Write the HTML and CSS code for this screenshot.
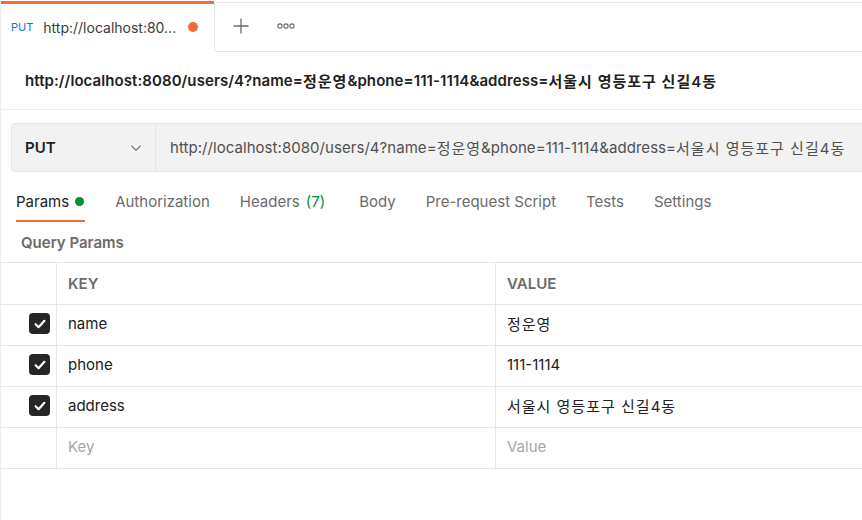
FILE: index.html
```html
<!DOCTYPE html>
<html>
<head>
<meta charset="utf-8">
<link rel="stylesheet" href="styles.css">
</head>
<body>
<div class="page">
  <div class="tabbar">
    <div class="tab-active">
      <span class="tab-method">PUT</span>
      <span class="tab-name">http://localhost:80...</span>
      <span class="tab-dot"></span>
    </div>
    <div class="tab-rest">
      <svg class="icon-plus" width="18" height="18" viewBox="0 0 18 18"><path d="M9 1.5v15M1.5 9h15" stroke="#6b6b6b" stroke-width="1.3" fill="none"/></svg>
      <svg class="icon-more" width="18" height="8" viewBox="0 0 18 8"><circle cx="3" cy="4" r="2.1" stroke="#6b6b6b" stroke-width="1.1" fill="none"/><circle cx="9" cy="4" r="2.1" stroke="#6b6b6b" stroke-width="1.1" fill="none"/><circle cx="15" cy="4" r="2.1" stroke="#6b6b6b" stroke-width="1.1" fill="none"/></svg>
    </div>
  </div>

  <div class="urltitle">http://localhost:8080/users/4?name=<span class="ko">정운영</span>&amp;phone=111-1114&amp;address=<span class="ko">서울시 영등포구 신길4동</span></div>

  <div class="urlbar">
    <div class="method">
      <span class="method-name">PUT</span>
      <svg class="chev" width="12" height="8" viewBox="0 0 12 8"><path d="M1.5 1.8l4.5 4.4 4.5-4.4" stroke="#6b6b6b" stroke-width="1.1" fill="none"/></svg>
    </div>
    <div class="url-input">http://localhost:8080/users/4?name=<span class="ko">정운영</span>&amp;phone=111-1114&amp;address=<span class="ko">서울시 영등포구 신길4동</span></div>
  </div>

  <div class="reqtabs">
    <div class="reqtab active">Params <span class="gdot"></span></div>
    <div class="reqtab">Authorization</div>
    <div class="reqtab headers">Headers <span class="count">(7)</span></div>
    <div class="reqtab">Body</div>
    <div class="reqtab">Pre-request Script</div>
    <div class="reqtab">Tests</div>
    <div class="reqtab">Settings</div>
  </div>

  <div class="qp-title">Query Params</div>

  <div class="table">
    <div class="row head">
      <div class="c-chk"></div>
      <div class="c-key">KEY</div>
      <div class="c-val">VALUE</div>
    </div>
    <div class="row">
      <div class="c-chk"><span class="cb"><svg width="12" height="10" viewBox="0 0 12 10"><path d="M1.6 5.2l3 3 5.8-6.4" stroke="#fff" stroke-width="2.2" fill="none" stroke-linecap="round" stroke-linejoin="round"/></svg></span></div>
      <div class="c-key">name</div>
      <div class="c-val"><span class="ko">정운영</span></div>
    </div>
    <div class="row">
      <div class="c-chk"><span class="cb"><svg width="12" height="10" viewBox="0 0 12 10"><path d="M1.6 5.2l3 3 5.8-6.4" stroke="#fff" stroke-width="2.2" fill="none" stroke-linecap="round" stroke-linejoin="round"/></svg></span></div>
      <div class="c-key">phone</div>
      <div class="c-val">111-1114</div>
    </div>
    <div class="row">
      <div class="c-chk"><span class="cb"><svg width="12" height="10" viewBox="0 0 12 10"><path d="M1.6 5.2l3 3 5.8-6.4" stroke="#fff" stroke-width="2.2" fill="none" stroke-linecap="round" stroke-linejoin="round"/></svg></span></div>
      <div class="c-key">address</div>
      <div class="c-val"><span class="ko">서울시 영등포구 신길4동</span></div>
    </div>
    <div class="row">
      <div class="c-chk"></div>
      <div class="c-key ph">Key</div>
      <div class="c-val ph">Value</div>
    </div>
  </div>
</div>
</body>
</html>
```

FILE: styles.css
```css
* { box-sizing: border-box; }
html, body { margin: 0; padding: 0; background: #fff; }
body {
  font-family: Inter, "Noto Sans CJK KR", sans-serif;
  font-size: 15px;
  color: #212121;
  overflow: hidden;
}
.page {
  width: 862px;
  height: 520px;
  border-left: 1px solid #ededed;
  overflow: hidden;
}
.ko { letter-spacing: 1px; }

/* top tab bar */
.tabbar {
  display: flex;
  height: 52px;
  padding-top: 1px;
}
.tab-active {
  width: 213px;
  border-top: 3px solid #f26b3a;
  display: flex;
  align-items: center;
  padding-left: 10px;
  padding-bottom: 2px;
}
.tab-method {
  font-size: 11px;
  color: #0b74de;
  margin-right: 10px;
}
.tab-name {
  font-size: 14px;
  color: #3b3b3b;
}
.tab-dot {
  width: 10px;
  height: 10px;
  border-radius: 50%;
  background: #f26b3a;
  margin-left: 12px;
}
.tab-rest {
  flex: 1;
  margin-top: 1px;
  border-top: 1px solid #e6e6e6;
  border-left: 1px solid #e6e6e6;
  border-bottom: 1px solid #e6e6e6;
  display: flex;
  align-items: center;
  padding-left: 17px;
  padding-bottom: 2px;
}
.icon-plus { margin-right: 27px; }

/* url title */
.urltitle {
  height: 58px;
  border-bottom: 1px solid #ededed;
  display: flex;
  align-items: center;
  padding-left: 24px;
  padding-bottom: 1px;
  font-weight: 600;
  font-size: 15px;
  color: #212121;
  white-space: pre;
  letter-spacing: 0.08px;
}

/* url bar */
.urlbar {
  display: flex;
  margin: 13px -20px 0 10px;
  height: 49px;
  background: #f2f2f2;
  border: 1px solid #e6e6e6;
  border-radius: 4px;
}
.method {
  width: 144px;
  border-right: 1px solid #e6e6e6;
  display: flex;
  align-items: center;
  justify-content: space-between;
  padding: 0 13px 0 13px;
}
.method-name {
  font-weight: 600;
  font-size: 15px;
  color: #212121;
}
.url-input {
  display: flex;
  align-items: center;
  padding-left: 14px;
  color: #505050;
  font-size: 15px;
  white-space: pre;
  letter-spacing: 0.05px;
}

/* request tabs */
.reqtabs {
  display: flex;
  gap: 30px;
  margin-top: 10px;
  padding-left: 15px;
  height: 40px;
}
.reqtab {
  display: flex;
  align-items: center;
  gap: 6px;
  color: #6b6b6b;
  font-size: 15px;
  height: 40px;
  padding-top: 1px;
  border-bottom: 2px solid transparent;
}
.reqtab.active {
  color: #212121;
  border-bottom-color: #f26b3a;
  padding-right: 1px;
}
.reqtab.headers { margin-right: 4px; }
.count { color: #0c8a3c; }
.gdot {
  width: 9px;
  height: 9px;
  border-radius: 50%;
  background: #0c8a3c;
}

.qp-title {
  height: 40px;
  display: flex;
  align-items: center;
  padding-left: 20px;
  font-weight: 600;
  font-size: 15px;
  color: #6b6b6b;
}

/* table */
.table {
  border-top: 1px solid #e6e6e6;
}
.row {
  display: flex;
  height: 41px;
  border-bottom: 1px solid #e6e6e6;
}
.row.head { height: 42px; }
.c-chk {
  width: 56px;
  border-right: 1px solid #e6e6e6;
  display: flex;
  align-items: center;
  justify-content: flex-end;
  padding-right: 6px;
  padding-bottom: 3px;
}
.c-key {
  width: 439px;
  border-right: 1px solid #e6e6e6;
  display: flex;
  align-items: center;
  padding-left: 11px;
  padding-bottom: 3px;
}
.c-val {
  flex: 1;
  display: flex;
  align-items: center;
  padding-left: 11px;
  padding-bottom: 3px;
  white-space: pre;
}
.head .c-key, .head .c-val {
  font-weight: 600;
  font-size: 15px;
  color: #6b6b6b;
  padding-bottom: 1px;
}
.ph { color: #a6a6a6; }
.cb {
  width: 21px;
  height: 21px;
  border-radius: 4px;
  background: #262626;
  display: flex;
  align-items: center;
  justify-content: center;
}
```
